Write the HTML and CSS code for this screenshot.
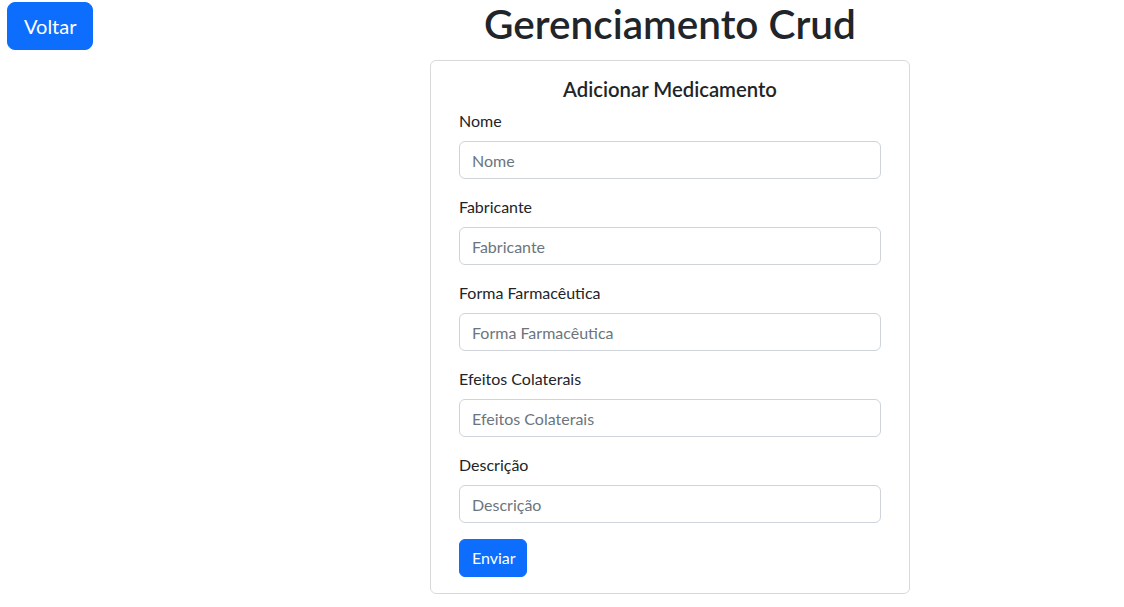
FILE: index.html
```html
<!DOCTYPE html>
<html lang="pt-BR">
<head>
<meta charset="utf-8">
<title>Gerenciamento Crud</title>
<link rel="stylesheet" href="styles.css">
</head>
<body>
<div class="layout">
  <aside class="side">
    <button class="btn btn-lg">Voltar</button>
  </aside>
  <main class="main">
    <h1 class="title">Gerenciamento Crud</h1>
    <div class="card">
      <h5 class="card-title">Adicionar Medicamento</h5>
      <form class="form">
        <label class="label">Nome</label>
        <input class="input" placeholder="Nome">
        <label class="label">Fabricante</label>
        <input class="input" placeholder="Fabricante">
        <label class="label">Forma Farmacêutica</label>
        <input class="input" placeholder="Forma Farmacêutica">
        <label class="label">Efeitos Colaterais</label>
        <input class="input" placeholder="Efeitos Colaterais">
        <label class="label">Descrição</label>
        <input class="input" placeholder="Descrição">
        <button type="button" class="btn btn-submit">Enviar</button>
      </form>
    </div>
  </main>
</div>
</body>
</html>
```
FILE: styles.css
```css
* { box-sizing: border-box; }
html, body { margin: 0; padding: 0; background: #fff; }
body {
  font-family: Lato, "Noto Sans", sans-serif;
  font-size: 16px;
  line-height: 1.5;
  color: #212529;
}
.layout { display: flex; align-items: flex-start; }
.side { width: 216px; padding: 2px 0 0 7px; }
.main { flex: 1; display: flex; flex-direction: column; align-items: center; }
.btn {
  font-family: inherit;
  background: #0d6efd;
  color: #fff;
  border: 1px solid #0d6efd;
  border-radius: 6px;
  cursor: pointer;
}
.btn-lg {
  font-size: 20px;
  line-height: 30px;
  padding: 8px 16px;
  border-radius: 8px;
  width: 86px;
}
.title {
  margin: 0 0 12px;
  font-size: 40.5px;
  font-weight: 600;
  line-height: 48px;
}
.card {
  width: 480px;
  border: 1px solid rgba(0,0,0,.15);
  border-radius: 6px;
  padding: 16px 28px 16px;
}
.card-title {
  margin: 0 0 8px;
  font-size: 20.3px;
  font-weight: 600;
  line-height: 24px;
  text-align: center;
}
.form { display: flex; flex-direction: column; align-items: flex-start; }
.label { display: block; margin-bottom: 8px; font-size: 16px; line-height: 24px; }
.input {
  display: block;
  width: 100%;
  height: 38px;
  margin-bottom: 16px;
  padding: 6px 12px;
  font-family: inherit;
  font-size: 16px;
  color: #212529;
  border: 1px solid #ced4da;
  border-radius: 6px;
  outline: none;
}
.input::placeholder { color: #6c757d; opacity: 1; }
.btn-submit {
  height: 38px;
  padding: 6px 12px;
  font-size: 16px;
  line-height: 24px;
  width: 68px;
}
```
